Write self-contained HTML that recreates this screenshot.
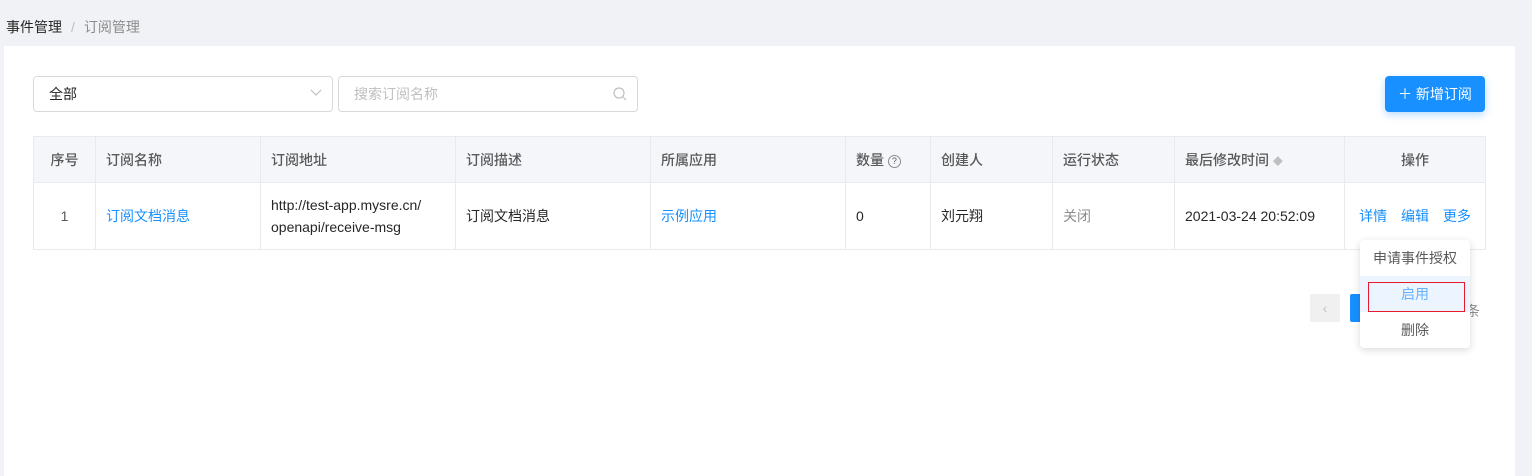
<!DOCTYPE html><html><head><meta charset="utf-8"><style>
*{box-sizing:border-box;margin:0;padding:0}
body{width:1532px;height:467px;background:#f0f2f5;font-family:"Liberation Sans","Noto Sans CJK SC",sans-serif;font-size:14px;color:#595959;position:relative;overflow:hidden}
.a{position:absolute}
.bc{left:6px;top:17px;font-size:14px;color:#8c8c8c}
.bc b{font-weight:normal;color:#262626}
.panel{left:4px;top:46px;width:1511px;height:430px;background:#fff}
.inp{border:1px solid #d9d9d9;border-radius:4px;height:36px;top:76px;line-height:34px;padding-left:15px}
table{position:absolute;left:33px;top:136px;width:1452px;border-collapse:collapse;table-layout:fixed}
td,th{border:1px solid #e8eaf0;text-align:left;padding:0 10px;font-weight:normal}
th{background:#f5f6fa;height:46px;color:#595959;font-weight:500}
td{height:67px;line-height:22px}
.l{color:#1890ff}
</style></head><body>
<div class="a bc"><b>事件管理</b><span style="margin:0 9px;color:#bfbfbf">/</span>订阅管理</div>
<div class="a panel"></div>
<div class="a inp" style="left:33px;width:300px;color:#262626">全部<svg class="a" style="right:10px;top:12px" width="12" height="8"><path d="M1 1l5 5 5-5" fill="none" stroke="#bfbfbf" stroke-width="1.2"/></svg></div>
<div class="a inp" style="left:338px;width:300px;color:#bfbfbf">搜索订阅名称<svg class="a" style="right:10px;top:10px" width="14" height="14"><circle cx="6" cy="6" r="5" fill="none" stroke="#bfbfbf" stroke-width="1.2"/><path d="M10 10l3 3" stroke="#bfbfbf" stroke-width="1.2"/></svg></div>
<div class="a" style="left:1385px;top:76px;width:100px;height:36px;background:#1890ff;border-radius:4px;color:#fff;line-height:36px;text-align:center;box-shadow:0 3px 8px rgba(24,144,255,.3)">＋ 新增订阅</div>
<table>
<colgroup><col style="width:62px"><col style="width:165px"><col style="width:195px"><col style="width:195px"><col style="width:195px"><col style="width:85px"><col style="width:122px"><col style="width:122px"><col style="width:170px"><col style="width:141px"></colgroup>
<tr><th style="text-align:center">序号</th><th>订阅名称</th><th>订阅地址</th><th>订阅描述</th><th>所属应用</th><th>数量 <span style="display:inline-block;width:13px;height:13px;border:1px solid #8c8c8c;border-radius:50%;font-size:9px;line-height:11px;text-align:center;vertical-align:1px">?</span></th><th>创建人</th><th>运行状态</th><th>最后修改时间 <span style="color:#bfbfbf;font-size:10px">◆</span></th><th style="text-align:center">操作</th></tr>
<tr><td style="text-align:center">1</td><td class="l">订阅文档消息</td><td style="color:#262626">http://test-app.mysre.cn/<br>openapi/receive-msg</td><td style="color:#262626">订阅文档消息</td><td class="l">示例应用</td><td style="color:#262626">0</td><td style="color:#262626">刘元翔</td><td style="color:#8c8c8c">关闭</td><td style="color:#262626">2021-03-24 20:52:09</td><td class="l" style="text-align:center;word-spacing:10px">详情 编辑 更多</td></tr>
</table>
<div class="a" style="left:1310px;top:294px;width:30px;height:28px;background:#f0f0f0;border-radius:2px;color:#bfbfbf;text-align:center;line-height:28px">‹</div>
<div class="a" style="left:1350px;top:294px;width:30px;height:28px;background:#1890ff;border-radius:2px"></div>
<div class="a" style="left:1466px;top:301px;color:#8c8c8c">条</div>
<div class="a" style="left:1360px;top:240px;width:110px;height:108px;background:#fff;border-radius:4px;box-shadow:0 2px 8px rgba(0,0,0,.15);text-align:center">
<div style="height:36px;line-height:36px;color:#595959">申请事件授权</div>
<div style="height:36px;line-height:36px;background:#ecf5ff;color:#66b1ff;position:relative">启用<div class="a" style="left:8px;top:6px;width:97px;height:30px;border:1px solid #e8192c"></div></div>
<div style="height:36px;line-height:36px;color:#595959">删除</div>
</div>
</body></html>
